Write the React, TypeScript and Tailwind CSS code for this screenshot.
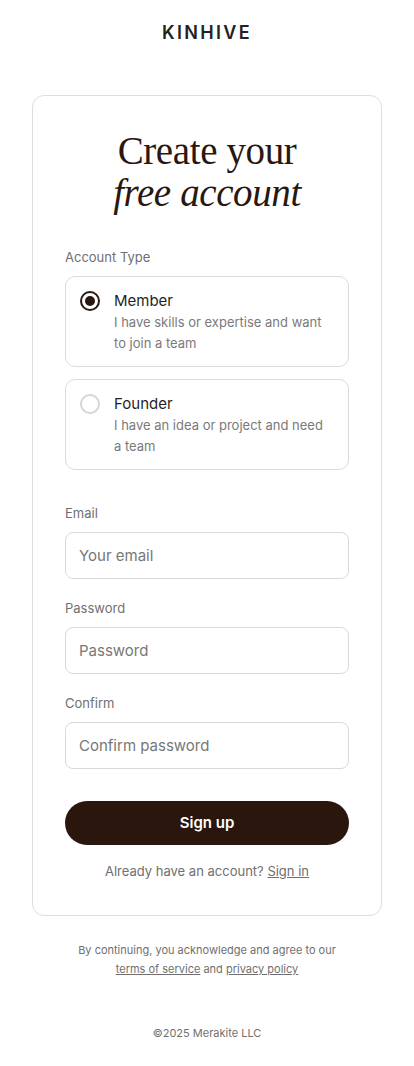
import { useState } from "react";

const sans = { fontFamily: "Inter, 'Noto Sans', sans-serif" };

function RadioCard({ checked, title, desc, onClick }: { checked: boolean; title: string; desc: string; onClick: () => void }) {
  return (
    <button
      type="button"
      onClick={onClick}
      className="flex w-full items-start gap-[14px] rounded-[10px] border border-[#dcdcdc] bg-white pl-[14px] pr-[20px] pt-[13px] pb-[12px] text-left"
    >
      <span
        className={
          "mt-[1px] flex h-[20px] w-[20px] shrink-0 items-center justify-center rounded-full border-2 " +
          (checked ? "border-[#2a1710]" : "border-[#d6d6d6]")
        }
      >
        {checked && <span className="h-[10px] w-[10px] rounded-full bg-[#2a1710]" />}
      </span>
      <span className="flex flex-col">
        <span className="text-[15px] leading-[22px] text-[#1f1f1f]">{title}</span>
        <span className="text-[13px] leading-[21px] text-[#7a7a7a]">{desc}</span>
      </span>
    </button>
  );
}

function Field({ label, placeholder, type = "text" }: { label: string; placeholder: string; type?: string }) {
  return (
    <div className="flex flex-col">
      <label className="mb-[9px] text-[13px] leading-[20px] text-[#6f6f6f]">{label}</label>
      <input
        type={type}
        placeholder={placeholder}
        className="h-[47px] w-full rounded-[8px] border border-[#d9d9d9] bg-white px-[13px] text-[15px] text-[#222] placeholder:text-[#777] outline-none"
      />
    </div>
  );
}

export default function App() {
  const [type, setType] = useState("member");

  return (
    <div className="min-h-screen bg-white pb-[24px]" style={sans}>
      <div className="flex justify-center pt-[19px]">
        <span className="text-[18px] font-semibold tracking-[0.13em] text-[#222]">KINHIVE</span>
      </div>

      <div className="mx-[32px] mt-[49px] rounded-[12px] border border-[#dedede] bg-white px-[32px] pt-[34px] pb-[34px]">
        <h1
          className="text-center text-[39px] leading-[42px] text-[#2a1710]"
          style={{ fontFamily: "'Liberation Serif', 'DejaVu Serif', serif", letterSpacing: "-0.01em" }}
        >
          Create your
          <br />
          <span className="italic">free account</span>
        </h1>

        <div className="mt-[33px] text-[13px] leading-[20px] text-[#6f6f6f]">Account Type</div>
        <div className="mt-[9px] flex flex-col gap-[12px]">
          <RadioCard
            checked={type === "member"}
            title="Member"
            desc="I have skills or expertise and want to join a team"
            onClick={() => setType("member")}
          />
          <RadioCard
            checked={type === "founder"}
            title="Founder"
            desc="I have an idea or project and need a team"
            onClick={() => setType("founder")}
          />
        </div>

        <div className="mt-[33px] flex flex-col gap-[19px]">
          <Field label="Email" placeholder="Your email" type="email" />
          <Field label="Password" placeholder="Password" type="password" />
          <Field label="Confirm" placeholder="Confirm password" type="password" />
        </div>

        <button className="mt-[32px] h-[44px] w-full rounded-full bg-[#2b160e] text-[15px] font-semibold text-white">
          Sign up
        </button>

        <p className="mt-[16px] text-center text-[13px] leading-[20px] text-[#6f6f6f]">
          Already have an account? <a className="underline">Sign in</a>
        </p>
      </div>

      <p className="mt-[25px] text-center text-[11px] leading-[19px] text-[#6f6f6f]">
        By continuing, you acknowledge and agree to our
        <br />
        <a className="underline">terms of service</a> and <a className="underline">privacy policy</a>
      </p>

      <p className="mt-[46px] text-center text-[11px] leading-[16px] text-[#6f6f6f]">©2025 Merakite LLC</p>
    </div>
  );
}
